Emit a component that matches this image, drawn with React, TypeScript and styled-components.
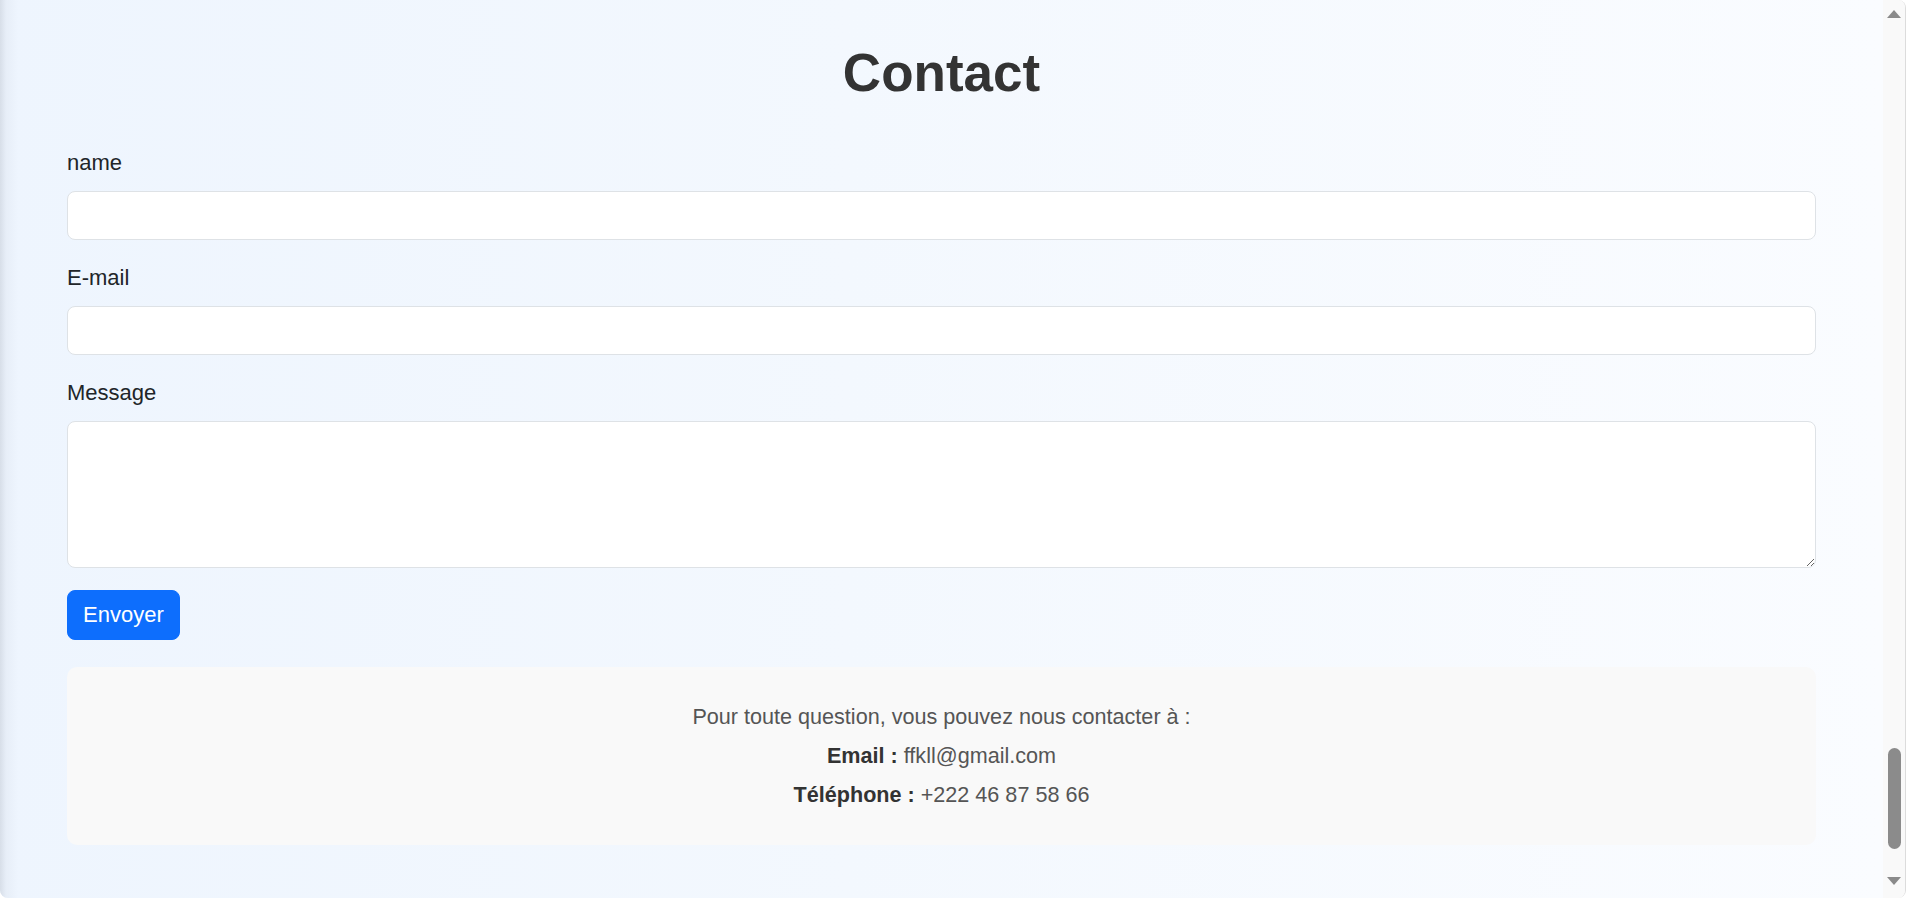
import React from 'react';
import styled, { createGlobalStyle } from 'styled-components';

const GlobalStyle = createGlobalStyle`
  html, body {
    margin: 0;
    padding: 0;
    background: #ffffff;
    overflow: hidden;
  }

  * {
    box-sizing: border-box;
  }
`;

const fields = [
  { id: 'name', label: 'name', type: 'text' },
  { id: 'email', label: 'E-mail', type: 'email' },
];

const App: React.FC = () => {
  return (
    <>
      <GlobalStyle />
      <Window>
        <Main>
          <Container>
            <Title>Contact</Title>
            <form onSubmit={(e) => e.preventDefault()}>
              {fields.map((field) => (
                <Field key={field.id}>
                  <Label htmlFor={field.id}>{field.label}</Label>
                  <Input id={field.id} type={field.type} />
                </Field>
              ))}
              <Field>
                <Label htmlFor="message">Message</Label>
                <TextArea id="message" />
              </Field>
              <SubmitButton type="submit">Envoyer</SubmitButton>
            </form>
            <InfoBox>
              <InfoLine>Pour toute question, vous pouvez nous contacter à :</InfoLine>
              <InfoLine>
                <strong>Email :</strong> ffkll@gmail.com
              </InfoLine>
              <InfoLine>
                <strong>Téléphone :</strong> +222 46 87 58 66
              </InfoLine>
            </InfoBox>
          </Container>
        </Main>
        <ScrollTrack>
          <Arrow $dir="up" />
          <ThumbArea>
            <Thumb />
          </ThumbArea>
          <Arrow $dir="down" />
        </ScrollTrack>
      </Window>
    </>
  );
};

export default App;

const Window = styled('div')`
  display: flex;
  width: 1906px;
  height: 898px;
  border-right: 1px solid #dcdcdc;
  border-radius: 0 8px 8px 8px;
  overflow: hidden;
  font-family: 'Liberation Sans', Arial, sans-serif;
  color: #212529;
`;

const Main = styled('main')`
  flex: 1;
  background:
    linear-gradient(to right, rgba(214, 221, 231, 0.95) 0, rgba(226, 233, 243, 0.6) 6px, rgba(238, 245, 254, 0) 18px),
    linear-gradient(to right, #eef5fe 0%, #f3f8fe 45%, #fafcff 100%);
`;

const Container = styled('div')`
  width: 1749px;
  margin: 0 auto;
  padding-top: 40px;
`;

const Title = styled('h1')`
  margin: 0 0 40px;
  font-size: 53px;
  line-height: 66px;
  font-weight: 700;
  text-align: center;
  color: #333333;
`;

const Field = styled('div')`
  margin-bottom: 21px;
`;

const Label = styled('label')`
  display: block;
  margin-bottom: 12px;
  font-size: 22px;
  line-height: 33px;
  color: #212529;
`;

const Input = styled('input')`
  display: block;
  width: 100%;
  height: 49px;
  padding: 8px 16px;
  font-family: inherit;
  font-size: 22px;
  background: #ffffff;
  border: 1px solid #dee2e6;
  border-radius: 8px;
  outline: none;
`;

const TextArea = styled('textarea')`
  display: block;
  width: 100%;
  height: 147px;
  padding: 8px 16px;
  font-family: inherit;
  font-size: 22px;
  background: #ffffff;
  border: 1px solid #dee2e6;
  border-radius: 8px;
  outline: none;
`;

const SubmitButton = styled('button')`
  display: block;
  height: 50px;
  margin-top: 22px;
  padding: 0 15px;
  font-family: inherit;
  font-size: 22px;
  line-height: 48px;
  color: #ffffff;
  background: #0d6efd;
  border: 1px solid #0d6efd;
  border-radius: 8px;
  cursor: pointer;
`;

const InfoBox = styled('section')`
  margin-top: 27px;
  padding: 30px 20px 31px;
  background: #f9f9f9;
  border-radius: 10px;
  text-align: center;
  color: #555555;
`;

const InfoLine = styled('p')`
  margin: 0;
  font-size: 21.6px;
  line-height: 39px;

  & strong {
    color: #333333;
  }
`;

const ScrollTrack = styled('div')`
  width: 22px;
  display: flex;
  flex-direction: column;
  align-items: center;
  background: #f9f9f9;
`;

const Arrow = styled('div')<{ $dir: 'up' | 'down' }>`
  flex: none;
  width: 0;
  height: 0;
  margin: ${({ $dir }) => ($dir === 'up' ? '10px 0 5px' : '4px 0 13px')};
  border-left: 7px solid transparent;
  border-right: 7px solid transparent;
  ${({ $dir }) =>
    $dir === 'up' ? 'border-bottom: 8px solid #8a8a8a;' : 'border-top: 8px solid #8a8a8a;'}
`;

const ThumbArea = styled('div')`
  flex: 1;
  display: flex;
  flex-direction: column;
  justify-content: flex-end;
  padding-bottom: 24px;
`;

const Thumb = styled('div')`
  width: 13px;
  height: 101px;
  background: #8b8b8b;
  border-radius: 7px;
`;
